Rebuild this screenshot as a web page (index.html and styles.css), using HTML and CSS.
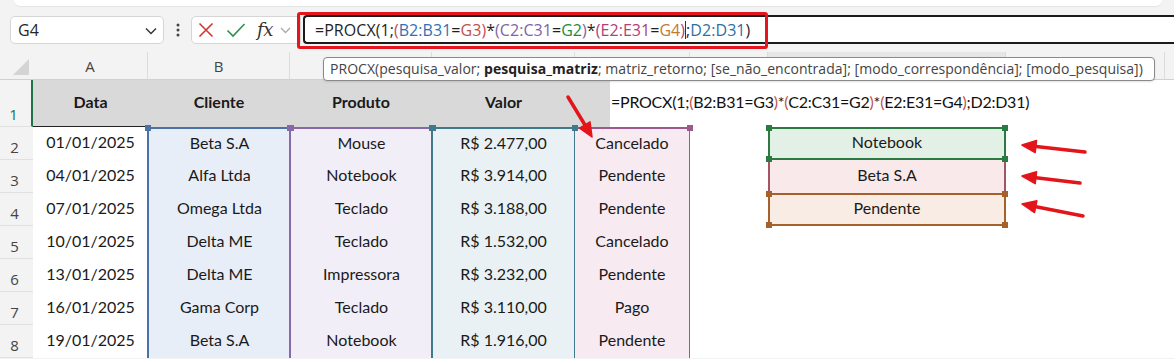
FILE: index.html
```html
<!DOCTYPE html>
<html lang="pt-BR">
<head>
<meta charset="utf-8">
<title>PROCX</title>
<link rel="stylesheet" href="styles.css">
</head>
<body>
<div class="app">
  <div class="ribbon-edge"></div>
  <div class="fbar">
    <div class="namebox">
      <span class="nb-text">G4</span>
      <svg class="chev" width="12" height="8" viewBox="0 0 12 8"><path d="M1 1.5 L6 6.5 L11 1.5" fill="none" stroke="#333" stroke-width="1.4"/></svg>
    </div>
    <div class="dots">
      <svg width="4" height="14" viewBox="0 0 4 14"><circle cx="2" cy="2" r="1.5" fill="#444"/><circle cx="2" cy="7" r="1.5" fill="#444"/><circle cx="2" cy="12" r="1.5" fill="#444"/></svg>
    </div>
    <div class="fxgroup">
      <svg class="ico-x" width="16" height="16" viewBox="0 0 16 16"><path d="M1.5 1.5 L14.5 14.5 M14.5 1.5 L1.5 14.5" stroke="#d13438" stroke-width="1.6" fill="none"/></svg>
      <svg class="ico-ok" width="20" height="16" viewBox="0 0 20 16"><path d="M1.5 8.5 L7 14 L18.5 2" stroke="#2f8f4a" stroke-width="1.6" fill="none"/></svg>
      <span class="fx">fx</span>
      <svg class="chev2" width="11" height="7" viewBox="0 0 11 7"><path d="M1 1 L5.5 5.5 L10 1" fill="none" stroke="#aaa" stroke-width="1.3"/></svg>
    </div>
    <div class="finput">
      <span class="ftext">=PROCX(1;<span class="c-b2">(</span><span class="c-b">B2:B31</span>=<span class="c-r">G3</span><span class="c-b2">)</span>*<span class="c-p">(C2:C31</span>=<span class="c-g">G2</span><span class="c-p">)</span>*<span class="c-m">(E2:E31</span>=<span class="c-o">G4</span><span class="c-m">)</span><span class="caret"></span>;<span class="c-t">D2:D31</span>)</span>
    </div>
  </div>

  <div class="sheet">
    <div class="corner"><span class="tri"></span></div>
    <div class="ch">A</div>
    <div class="ch">B</div>
    <div class="ch"></div>
    <div class="ch"></div>
    <div class="ch"></div>
    <div class="ch"></div>
    <div class="ch ch-sel"></div>
    <div class="ch"></div>
    <div class="ch ch-last"></div>

    <div class="rh rh-sel">1</div>
    <div class="hd hd-a">Data</div>
    <div class="hd">Cliente</div>
    <div class="hd">Produto</div>
    <div class="hd">Valor</div>
    <div class="hd-formula">=PROCX(1;<span class="p1">(</span>B2:B31=G3<span class="p1">)</span>*<span class="p1">(</span>C2:C31=G2<span class="p1">)</span>*<span class="p1">(</span>E2:E31=G4<span class="p1">)</span>;D2:D31)</div>

    <div class="rh">2</div>
    <div class="c">01/01/2025</div>
    <div class="c rb top">Beta S.A</div>
    <div class="c rc top">Mouse</div>
    <div class="c rd top">R$ 2.477,00</div>
    <div class="c re top">Cancelado</div>
    <div class="c"></div>
    <div class="c g2">Notebook<i class="h h-bl"></i><i class="h h-br"></i></div>
    <div class="c"></div>
    <div class="c"></div>

    <div class="rh">3</div>
    <div class="c">04/01/2025</div>
    <div class="c rb">Alfa Ltda</div>
    <div class="c rc">Notebook</div>
    <div class="c rd">R$ 3.914,00</div>
    <div class="c re">Pendente</div>
    <div class="c"></div>
    <div class="c g3">Beta S.A</div>
    <div class="c"></div>
    <div class="c"></div>

    <div class="rh">4</div>
    <div class="c">07/01/2025</div>
    <div class="c rb">Omega Ltda</div>
    <div class="c rc">Teclado</div>
    <div class="c rd">R$ 3.188,00</div>
    <div class="c re">Pendente</div>
    <div class="c"></div>
    <div class="c g4">Pendente<i class="h h-bl"></i><i class="h h-br"></i></div>
    <div class="c"></div>
    <div class="c"></div>

    <div class="rh">5</div>
    <div class="c">10/01/2025</div>
    <div class="c rb">Delta ME</div>
    <div class="c rc">Teclado</div>
    <div class="c rd">R$ 1.532,00</div>
    <div class="c re">Cancelado</div>
    <div class="c"></div>
    <div class="c"></div>
    <div class="c"></div>
    <div class="c"></div>

    <div class="rh">6</div>
    <div class="c">13/01/2025</div>
    <div class="c rb">Delta ME</div>
    <div class="c rc">Impressora</div>
    <div class="c rd">R$ 3.232,00</div>
    <div class="c re">Pendente</div>
    <div class="c"></div>
    <div class="c"></div>
    <div class="c"></div>
    <div class="c"></div>

    <div class="rh">7</div>
    <div class="c">16/01/2025</div>
    <div class="c rb">Gama Corp</div>
    <div class="c rc">Teclado</div>
    <div class="c rd">R$ 3.110,00</div>
    <div class="c re">Pago</div>
    <div class="c"></div>
    <div class="c"></div>
    <div class="c"></div>
    <div class="c"></div>

    <div class="rh">8</div>
    <div class="c">19/01/2025</div>
    <div class="c rb">Beta S.A</div>
    <div class="c rc">Notebook</div>
    <div class="c rd">R$ 1.916,00</div>
    <div class="c re">Pendente</div>
    <div class="c"></div>
    <div class="c"></div>
    <div class="c"></div>
    <div class="c"></div>
  </div>

  <div class="redbox"></div>
  <div class="tooltip">PROCX(pesquisa_valor; <b>pesquisa_matriz</b>; matriz_retorno; [se_não_encontrada]; [modo_correspondência]; [modo_pesquisa])</div>

  <svg class="arrows" width="1174" height="359" viewBox="0 0 1174 359">
    <g stroke="#e3151b" stroke-width="3.5" stroke-linecap="round" fill="#e3151b">
      <line x1="568" y1="97" x2="585" y2="125"/>
      <polygon points="592,137 579.6,128.1 590,121.9" stroke-width="1.5" stroke-linejoin="round"/>
      <line x1="1085" y1="152" x2="1036" y2="146.5"/>
      <polygon points="1022,145 1036.6,140.5 1035.2,152.5" stroke-width="1.5" stroke-linejoin="round"/>
      <line x1="1080" y1="183" x2="1036" y2="177.7"/>
      <polygon points="1022,176 1036.6,171.7 1035.2,183.7" stroke-width="1.5" stroke-linejoin="round"/>
      <line x1="1083" y1="216" x2="1036" y2="206.7"/>
      <polygon points="1022,204 1036.9,200.8 1034.5,212.6" stroke-width="1.5" stroke-linejoin="round"/>
    </g>
  </svg>
</div>
</body>
</html>
```

FILE: styles.css
```css
* { box-sizing: border-box; }
html, body { margin: 0; padding: 0; }
body {
  width: 1174px;
  height: 359px;
  overflow: hidden;
  background: #f3f3f3;
  font-family: "Open Sans", "Noto Sans", sans-serif;
}
.app {
  position: relative;
  width: 1174px;
  height: 359px;
  overflow: hidden;
}
.ribbon-edge {
  height: 6px;
  margin: 0 12px 0 14px;
  background: #fff;
  border-radius: 0 0 8px 8px;
  box-shadow: 0 1px 1px rgba(0,0,0,0.06);
}

/* formula bar */
.fbar {
  height: 46px;
  display: flex;
  align-items: flex-start;
  padding-top: 10px;
}
.namebox {
  margin-left: 10px;
  width: 154px;
  height: 28px;
  background: #fff;
  border: 1px solid #d6d6d6;
  border-radius: 5px;
  display: flex;
  align-items: center;
  justify-content: space-between;
  padding: 0 6px 0 7px;
}
.nb-text { font-size: 16px; color: #262626; }
.chev { margin-top: 1px; }
.dots {
  width: 27px;
  height: 28px;
  display: flex;
  align-items: center;
  justify-content: center;
}
.fxgroup {
  width: 110px;
  height: 28px;
  background: #fff;
  border: 1px solid #d6d6d6;
  border-radius: 5px 0 0 5px;
  display: flex;
  align-items: center;
  padding-left: 6px;
}
.ico-x { margin-right: 12px; }
.ico-ok { margin-right: 11px; }
.fx {
  font-family: "DejaVu Serif", "Liberation Serif", serif;
  font-style: italic;
  font-size: 18px;
  color: #333;
  letter-spacing: -0.5px;
  margin-right: 7px;
  line-height: 1;
}
.finput {
  margin-left: 2px;
  margin-top: -1px;
  flex: 1;
  height: 29px;
  background: #fff;
  border: 2px solid #1b1b1b;
  border-right: none;
  border-radius: 4px 0 0 4px;
  display: flex;
  align-items: center;
  padding-left: 10px;
}
.ftext {
  font-size: 16px;
  color: #1f1f1f;
  white-space: nowrap;
  letter-spacing: 0.05px;
}
.c-b { color: #2f72b3; }
.c-b2 { color: #c0504d; }
.c-r { color: #c0504d; }
.c-p { color: #8064a2; }
.c-g { color: #1e8a3c; }
.c-m { color: #b0407a; }
.c-o { color: #c27a33; }
.c-t { color: #2f6fa0; }
.caret {
  display: inline-block;
  width: 1px;
  height: 18px;
  background: #333;
  vertical-align: -3px;
}

.redbox {
  position: absolute;
  left: 297px;
  top: 12px;
  width: 471px;
  height: 37px;
  border: 3px solid #e4161d;
  border-radius: 3px;
}

/* tooltip */
.tooltip {
  position: absolute;
  left: 323px;
  top: 57px;
  width: 832px;
  height: 24px;
  background: #fff;
  border: 1px solid #8a8a8a;
  border-radius: 4px;
  font-size: 14px;
  line-height: 22px;
  color: #444;
  padding-left: 6px;
  white-space: nowrap;
  letter-spacing: 0.04px;
  box-shadow: 0 1px 2px rgba(0,0,0,0.12);
}
.tooltip b { color: #222; font-weight: 700; }

/* sheet */
.sheet {
  display: grid;
  grid-template-columns: 33px 115px 142px 142px 143px 115px 78px 238px 159px 1fr;
  grid-template-rows: 28px 47px repeat(7, 33px);
  font-family: "Lato", "Liberation Sans", sans-serif;
}
.corner {
  background: #f3f3f3;
  border-bottom: 1px solid #d0d0d0;
  position: relative;
}
.tri {
  position: absolute;
  right: 4px;
  bottom: 4px;
  width: 0;
  height: 0;
  border-left: 16px solid transparent;
  border-bottom: 16px solid #d4d4d4;
}
.ch {
  background: #f3f3f3;
  border-bottom: 1px solid #d0d0d0;
  border-right: 1px solid #dcdcdc;
  font-family: "Open Sans", "Noto Sans", sans-serif;
  font-size: 15px;
  color: #444;
  display: flex;
  align-items: center;
  justify-content: center;
  padding-top: 0;
}
.ch-sel { background: #e6e6e6; }
.ch-last { border-right: none; }

.rh {
  background: #f3f3f3;
  border-bottom: 1px solid #e0e0e0;
  font-family: "Open Sans", "Noto Sans", sans-serif;
  font-size: 15px;
  color: #444;
  display: flex;
  align-items: flex-end;
  justify-content: center;
  padding-bottom: 2px;
  padding-right: 4px;
}
.rh-sel { color: #217346; border-right: 2px solid #217346; }

.hd {
  background: #d9d9d9;
  font-weight: 700;
  font-size: 16px;
  color: #1a1a1a;
  display: flex;
  align-items: center;
  justify-content: center;
  padding-bottom: 4px;
}
.hd-a { border-bottom: 1.5px solid #222; }
.hd-formula {
  grid-column: 6 / -1;
  background: linear-gradient(to right, #d9d9d9 35px, #fff 35px);
  font-size: 16px;
  color: #111;
  display: flex;
  align-items: center;
  padding-left: 36px;
  padding-bottom: 4px;
  white-space: nowrap;
  letter-spacing: -0.25px;
}
.p1 { color: #c0504d; }

.c {
  background: #fff;
  font-size: 16px;
  color: #1a1a1a;
  display: flex;
  align-items: center;
  justify-content: center;
  padding-bottom: 4px;
  white-space: nowrap;
  position: relative;
}
.rb { background: #e8eef8; border-left: 2px solid #4a72a6; margin-left: -1px; }
.rc { background: #f1eef8; border-left: 2px solid #8769a8; margin-left: -1px; }
.rd { background: #e9f1f4; border-left: 2px solid #3f7a8c; border-right: 2px solid #3f7a8c; margin-left: -1px; margin-right: -1px; }
.re { background: #f8eaf1; border-right: 2px solid #9c5a8c; margin-right: -1px; }
.rb.top { border-top: 2px solid #4a72a6; }
.rc.top { border-top: 2px solid #8769a8; }
.rd.top { border-top: 2px solid #3f7a8c; }
.re.top { border-top: 2px solid #9c5a8c; }

.top::before, .top::after,
.g2::before, .g2::after, .g4::before, .g4::after {
  content: "";
  position: absolute;
  width: 6px;
  height: 6px;
  top: -4px;
  z-index: 2;
}
.top::before { left: -4px; }
.top::after { right: -4px; }
.rb.top::before { background: #4a72a6; }
.rb.top::after { background: #8769a8; }
.rc.top::before { background: #8769a8; }
.rc.top::after { background: #3f7a8c; }
.rd.top::before { background: #3f7a8c; }
.rd.top::after { background: #3f7a8c; }
.re.top::before { display: none; }
.re.top::after { background: #9c5a8c; }

.g2 { background: #e3f0e6; border: 2px solid #2c7a43; }
.g3 { background: #f9e9ea; border-left: 2px solid #a15565; border-right: 2px solid #a15565; }
.g4 { background: #f9ece4; border: 2px solid #a6612a; }
.g2::before { left: -4px; background: #2c7a43; }
.g2::after { right: -4px; background: #2c7a43; }
.g4::before { left: -4px; background: #a6612a; }
.g4::after { right: -4px; background: #a6612a; }

.h {
  position: absolute;
  width: 6px;
  height: 6px;
  bottom: -4px;
  z-index: 2;
}
.h-bl { left: -4px; }
.h-br { right: -4px; }
.g2 .h { background: #2c7a43; }
.g4 .h { background: #a6612a; }

.arrows {
  position: absolute;
  left: 0;
  top: 0;
  pointer-events: none;
}
```
